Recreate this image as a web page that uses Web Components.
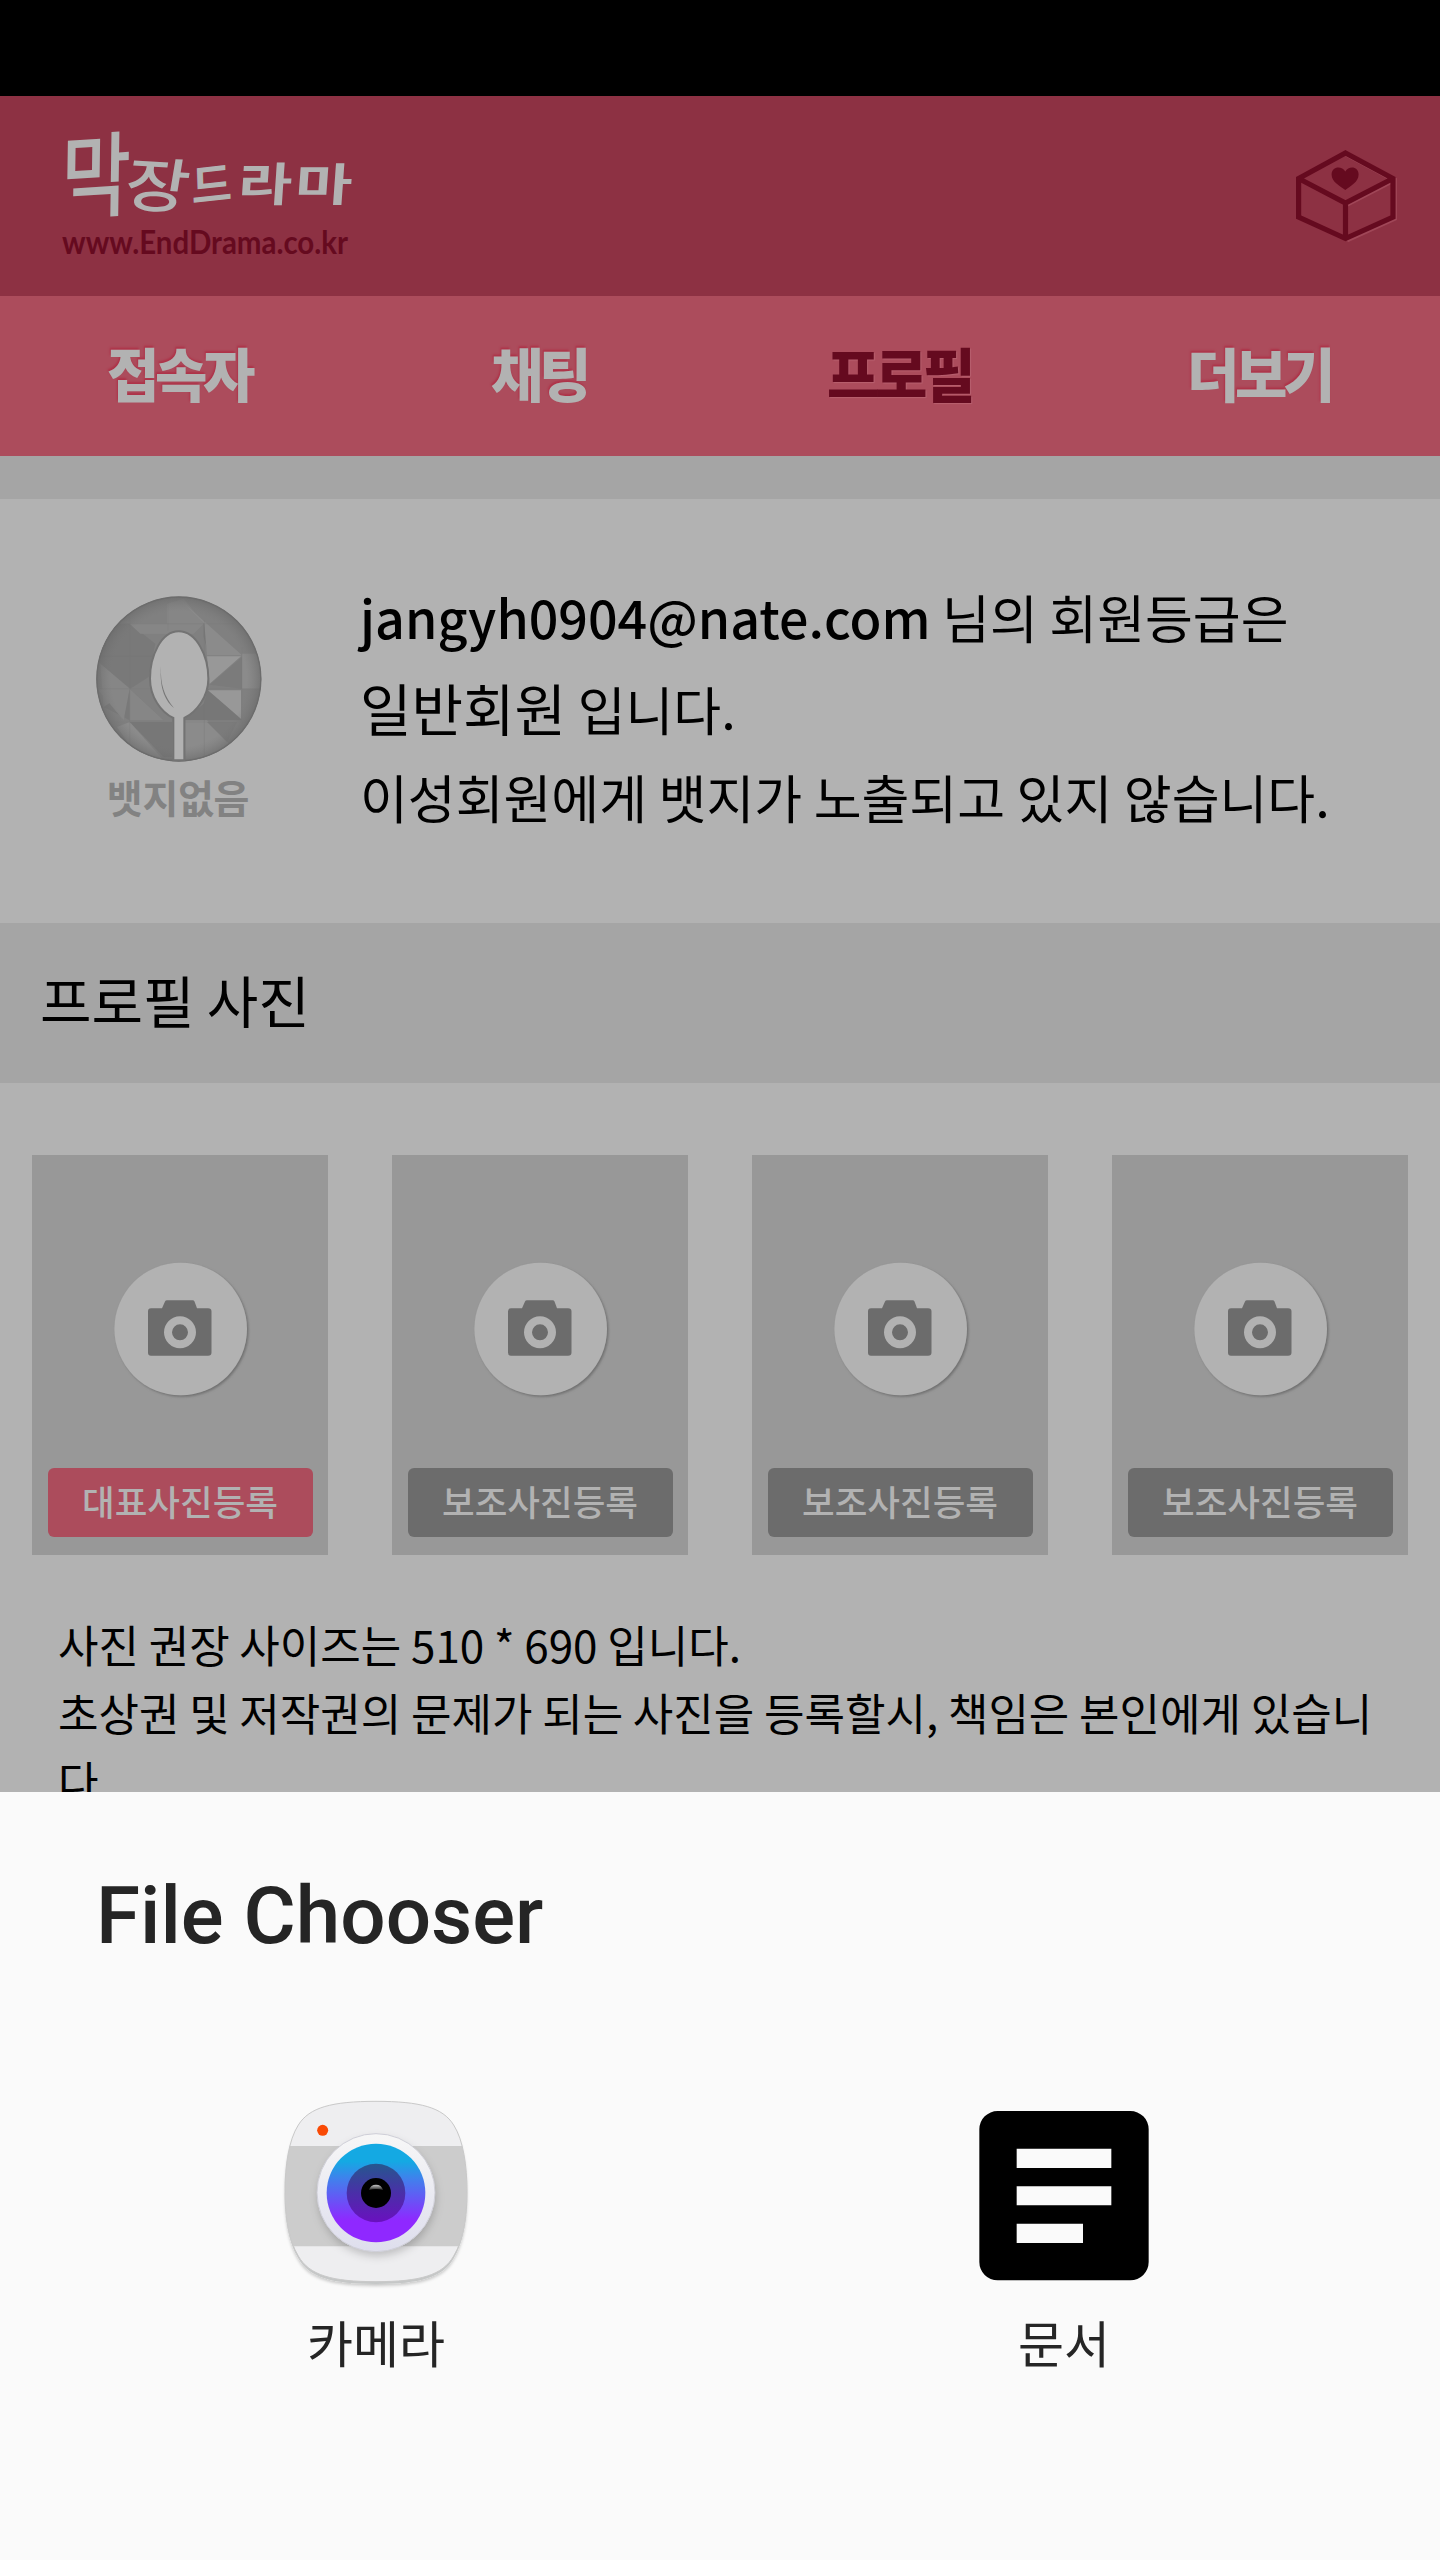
<!DOCTYPE html>
<html lang="ko">
<head>
<meta charset="utf-8">
<title>막장드라마</title>
<style>
html,body{margin:0;padding:0;background:#fafafa}
body{font-family:"Noto Sans CJK KR",sans-serif;color:#000}
</style>
</head>
<body>
<end-drama-app></end-drama-app>
<script>
const define = (name, html) => customElements.define(name, class extends HTMLElement {
  constructor() {
    super();
    this.attachShadow({ mode: 'open' }).innerHTML = html;
  }
});

define('brand-logo', `
<style>:host{display:block;width:340px;height:200px}svg{display:block;overflow:visible}text{font-family:"Noto Sans CJK KR",sans-serif}</style>
<svg width="340" height="200" viewBox="0 0 340 200">
  <g fill="#b2b2b2" font-weight="500">
    <text transform="translate(21 122) scale(.9 1.1) rotate(-3) skewX(-4)" font-size="84">막</text>
    <text transform="translate(82 115) scale(1.16 .98) rotate(4) skewX(-4)" font-size="60">장</text>
    <text transform="translate(152 114) scale(.96 1) rotate(-6) skewX(-4)" font-size="46" font-weight="700">드</text>
    <text transform="translate(197 111) scale(1.2 .94) skewX(-3)" font-size="49" font-weight="700">라</text>
    <text transform="translate(254 111) scale(1.27 .92) skewX(-3)" font-size="49" font-weight="700">마</text>
  </g>
  <text x="22" y="164" font-size="32" style="font-family:Lato,sans-serif;font-weight:700" fill="#650a1f" textLength="286" lengthAdjust="spacingAndGlyphs">www.EndDrama.co.kr</text>
</svg>`);

define('gift-box', `
<style>:host{display:block;width:180px;height:200px}svg{display:block}</style>
<svg width="180" height="200" viewBox="0 0 180 200">
  <g fill="none" stroke-width="5.2">
    <path transform="translate(1.3 1.3)" stroke="#a04758" d="M85.5 63 133 88.5V127L85.5 148.5M85.5 113 133 88.5"/>
    <path stroke="#650a1f" d="M85.5 63 133 88.5V127L85.5 148.5 38.6 127V88.5ZM38.6 88.5 85.5 113 133 88.5M85.5 113V148.5"/>
  </g>
  <path fill="#650a1f" d="M85.3 100C80 96 71.6 92 71.6 84.5 71.6 76 82 75.5 85.3 81.5 88.6 75.5 98.6 76 98.6 84.5 98.6 92 90.5 96 85.3 100Z"/>
</svg>`);

define('app-header', `
<style>:host{display:flex;justify-content:space-between;height:200px;background:#8d3143}
brand-logo{margin:-6px 0 0 40px}gift-box{margin-top:-6px}</style>
<brand-logo></brand-logo><gift-box></gift-box>`);

define('nav-tab', `
<style>:host{display:flex;justify-content:center;align-items:center;flex:1;height:160px;font-size:57px;font-weight:900;letter-spacing:-4.5px;color:#b2b2b2;
text-shadow:-1px -1px 2px #ae3248}
:host([active]){color:#650a1f;text-shadow:1px 1px 1px #b8606f}
span{transform:translate(-1px,-5px) scaleY(1.02)}</style>
<span><slot></slot></span>`);

define('nav-bar', `<style>:host{display:flex;height:160px;background:#ac4c5c}</style><slot></slot>`);

define('grade-badge', `
<style>:host{display:flex;flex-direction:column;align-items:center;width:166px}svg{display:block}
span{font-size:39px;line-height:48px;font-weight:700;color:#828282;margin:10px 2px 0 0;letter-spacing:-.3px}</style>
<svg width="166" height="166" viewBox="107 107 498 498">
  <defs><clipPath id="c"><circle cx="355.500" cy="356" r="247"/></clipPath>
  <radialGradient id="g"><stop offset=".82" stop-color="#777" stop-opacity="0"/><stop offset="1" stop-color="#686868" stop-opacity=".65"/></radialGradient></defs>
  <g clip-path="url(#c)">
    <path fill="#808080" d="M107 107H605V605H107Z"/>
    <path fill="#797979" d="M110 190H210L285 250 265 350 210 385 120 310ZM130 440 208 385 310 480H208Z"/>
    <path fill="#868686" d="M208 190H320V130L370 115 430 190 400 220H240ZM120 310 208 385 130 440ZM208 385V480H310ZM110 385H208L190 480Z"/>
    <path fill="#777" d="M430 190 520 270 445 285 430 230ZM443 385 545 480H370L430 430ZM208 485H335V590H310Z"/>
    <path fill="#8b8b8b" d="M350 110 545 285H440L432 190ZM545 280H605V385H545ZM375 480H440L515 560 460 605H375ZM170 500 208 485 310 600H240Z"/>
    <path fill="#989898" d="M440 288H542L448 370ZM443 390H542V475Z"/>
    <path fill="#7b7b7b" d="M448 373 545 290V385ZM440 485H530L500 545Z"/>
    <path fill="none" stroke="#777" stroke-opacity=".3" stroke-width="3" d="M208 170V560M110 385H600M110 288H275M190 190H520M323 110V210M432 180V600M545 260V490M120 485H590"/>
    <circle cx="355.500" cy="356" r="248" fill="url(#g)"/>
  </g>
  <circle cx="355.500" cy="356" r="246" fill="none" stroke="#6c6c6c" stroke-width="4"/>
  <path fill="#b2b2b2" stroke="#737373" stroke-width="6" d="M355 213C409 213 444 288 444 355 444 410 408 455 372 473V600H339V473C302 455 269 410 269 355 269 288 302 213 355 213Z"/>
  <path fill="#777" d="M302 318C299 373 313 410 341 443 319 426 296 390 302 318Z"/>
</svg>
<span>뱃지없음</span>`);

define('member-grade', `
<style>:host{display:flex;height:424px;background:#b2b2b2}
grade-badge{margin:97px 0 0 96px}
.t{margin:73px 0 0 98px;font-size:52px;white-space:nowrap;word-spacing:-3px}
p{margin:0;height:90px;line-height:90px}p+p{margin-top:2px}p+p+p{line-height:86px;margin-top:0}
b{font-weight:500}i{font-style:normal;font-size:56px;line-height:1}</style>
<grade-badge></grade-badge>
<div class="t"><p><b>jangyh0904@nate.com</b> 님의 회원등급은</p><p><i>일반회원</i> 입니다.</p><p>이성회원에게 뱃지가 노출되고 있지 않습니다.</p></div>`);

define('section-title', `
<style>:host{display:block;height:160px;line-height:151px;padding-left:40px;background:#a5a5a5;font-size:56px;word-spacing:-3.500px}</style><slot></slot>`);

define('photo-slot', `
<style>:host{display:flex;flex-direction:column;align-items:center;width:296px;height:400px;background:#989898;--b:#6c6c6c}
:host([main]){--b:#ac4c5c}
svg{display:block;margin-top:102px}
div{width:265px;height:69px;margin:67px 0 0;border-radius:6px;background:var(--b);color:#b2b2b2;text-align:center;font-size:35.500px;line-height:65px;font-weight:500}</style>
<svg width="144" height="144" viewBox="109 1257 144 144">
  <defs><filter id="s" x="-20%" y="-20%" width="140%" height="140%"><feDropShadow dx="1.500" dy="1.500" stdDeviation="1.300" flood-color="#666" flood-opacity=".8"/></filter></defs>
  <circle cx="181.700" cy="1329" r="66.300" fill="#b2b2b2" filter="url(#s)"/>
  <path fill="#6c6c6c" d="M152 1308.300H163L166 1301.500Q166.500 1300.300 168 1300.300H193.500Q195 1300.300 195.500 1301.500L198 1308.300H209Q212.500 1308.300 212.500 1311.500V1352.500Q212.500 1355.700 209 1355.700H152Q149 1355.700 149 1352.500V1311.500Q149 1308.300 152 1308.300Z"/>
  <circle cx="181" cy="1332.300" r="12" fill="none" stroke="#b2b2b2" stroke-width="8"/>
</svg>
<div><slot></slot></div>`);

define('photo-grid', `<style>:host{display:flex;justify-content:space-between;padding:72px 32px 0}</style><slot></slot>`);

define('photo-notice', `
<style>:host{display:block;padding:55px 58px 0;font-size:44px;line-height:68px;white-space:nowrap;word-spacing:-2.600px}p{margin:0}</style>
<p>사진 권장 사이즈는 510 * 690 입니다.</p><p>초상권 및 저작권의 문제가 되는 사진을 등록할시, 책임은 본인에게 있습니<br>다.</p>`);

define('camera-icon', `
<style>:host{display:block}svg{display:block}</style>
<svg width="200" height="200" viewBox="48 46 600 600">
  <defs>
    <linearGradient id="e" x1="0" y1="0" x2="0" y2="1"><stop offset=".18" stop-color="#14a9e3"/><stop offset=".35" stop-color="#3f82ec"/><stop offset=".78" stop-color="#8f28ff"/></linearGradient>
    <linearGradient id="r" x1="0" y1="0" x2="0" y2="1"><stop offset="0" stop-color="#f7f7f7"/><stop offset="1" stop-color="#dedeed"/></linearGradient>
    <linearGradient id="h" x1="0" y1="0" x2="0" y2="1"><stop offset="0" stop-color="#ccc"/><stop offset="1" stop-color="#222"/></linearGradient>
    <linearGradient id="i" x1="0" y1="0" x2="0" y2="1"><stop offset="0" stop-color="#25588e"/><stop offset=".5" stop-color="#4a2fa8"/><stop offset="1" stop-color="#6a10bf"/></linearGradient>
    <filter id="f" x="-20%" y="-20%" width="140%" height="140%"><feDropShadow dx="0" dy="6" stdDeviation="5" flood-color="#000" flood-opacity=".2"/></filter>
    <filter id="k" x="-20%" y="-20%" width="150%" height="150%"><feDropShadow dx="3" dy="14" stdDeviation="12" flood-color="#000" flood-opacity=".2"/></filter>
    <path id="p" d="M348 65C480 65 548 83 581 136 610 181 621 260 621 335 621 410 612 477 581 529 548 587 480 606 348 606 216 606 148 587 115 529 84 477 75 410 75 335 75 260 86 181 115 136 148 83 216 65 348 65Z"/>
    <clipPath id="q"><use href="#p"/></clipPath>
  </defs>
  <use href="#p" transform="translate(0 7)" fill="#c5c7c7" filter="url(#f)"/>
  <use href="#p" fill="#eeeef0"/>
  <g clip-path="url(#q)"><path fill="#ccc" d="M60 199H640V500H60Z"/><circle cx="348" cy="339" r="176" fill="#ddd" filter="url(#k)"/></g>
  <use href="#p" fill="none" stroke="#c9c9c9" stroke-width="3"/>
  <circle cx="348" cy="339" r="177" fill="url(#r)" stroke="#cfcfd8" stroke-width="3"/>
  <circle cx="348" cy="340" r="148" fill="url(#e)"/>
  <circle cx="348" cy="340" r="88" fill="url(#i)"/>
  <circle cx="348" cy="340" r="45"/>
  <path fill="url(#h)" d="M327 331Q332 315 348 315T369 331Q348 325 327 331Z"/>
  <circle cx="188" cy="152" r="16.500" fill="#f94a05"/>
</svg>`);

define('document-icon', `
<style>:host{display:block}svg{display:block}</style>
<svg width="200" height="200" viewBox="43 46 600 600">
  <path fill="#000" fill-rule="evenodd" d="M144 94H542A55 55 0 0 1 597 149V547A55 55 0 0 1 542 602H144A55 55 0 0 1 89 547V149A55 55 0 0 1 144 94ZM201 207V265H485V207ZM201 320V377H485V320ZM201 432V490H400V432Z"/>
</svg>`);

define('chooser-item', `
<style>:host{display:flex;flex-direction:column;align-items:center;font-size:50px;line-height:72px;color:#252525}
span{margin-top:10px}</style>
<slot name="icon"></slot><span><slot></slot></span>`);

define('file-chooser', `
<style>:host{display:block;height:768px;background:#fafafa}
h1{margin:0;padding:77px 0 0 96px;font:500 80px/94px Roboto,sans-serif;color:#252525}
div{display:grid;grid-template-columns:1fr 1fr;padding:132px 32px 0}</style>
<h1>File Chooser</h1>
<div>
  <chooser-item><camera-icon slot="icon"></camera-icon>카메라</chooser-item>
  <chooser-item><document-icon slot="icon"></document-icon>문서</chooser-item>
</div>`);

define('end-drama-app', `
<style>:host{display:flex;flex-direction:column;width:1440px;height:2560px;overflow:hidden}
.status{height:96px;background:#000}
.page{height:1696px;overflow:hidden;background:#b2b2b2}
.gap{height:43px;background:#a5a5a5}</style>
<div class="status"></div>
<div class="page">
  <app-header></app-header>
  <nav-bar><nav-tab>접속자</nav-tab><nav-tab>채팅</nav-tab><nav-tab active>프로필</nav-tab><nav-tab>더보기</nav-tab></nav-bar>
  <div class="gap"></div>
  <member-grade></member-grade>
  <section-title>프로필 사진</section-title>
  <photo-grid><photo-slot main>대표사진등록</photo-slot><photo-slot>보조사진등록</photo-slot><photo-slot>보조사진등록</photo-slot><photo-slot>보조사진등록</photo-slot></photo-grid>
  <photo-notice></photo-notice>
</div>
<file-chooser></file-chooser>`);
</script>
</body>
</html>
